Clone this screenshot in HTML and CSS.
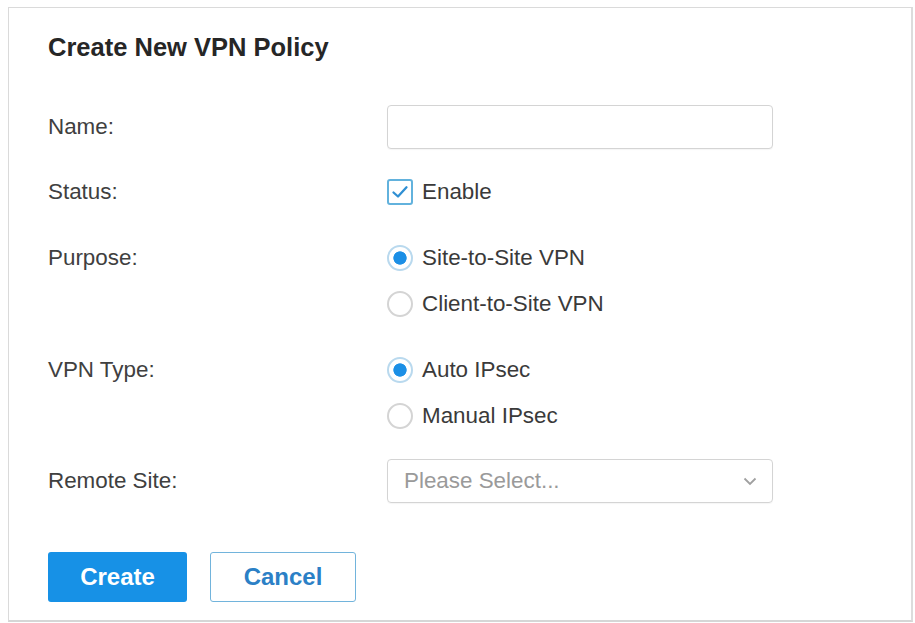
FILE: index.html
```html
<!DOCTYPE html>
<html lang="en">
<head>
  <meta charset="utf-8">
  <title>Create New VPN Policy</title>
  <link rel="stylesheet" href="styles.css">
</head>
<body>
  <div class="policy-card">
    <h1 class="policy-title">Create New VPN Policy</h1>

    <div class="field">
      <label class="field-label" for="policyName">Name:</label>
      <input class="text-input" type="text" id="policyName">
    </div>

    <div class="field">
      <span class="field-label option-label">Status:</span>
      <div class="options">
        <label class="option">
          <span class="checkbox">
            <svg width="20" height="20" viewBox="0 0 20 20"><path d="M3.5 10.5 L8 14.5 L16.5 5.3" fill="none" stroke="#2f8fd3" stroke-width="2.3" stroke-linecap="round" stroke-linejoin="round"/></svg>
          </span>
          Enable
        </label>
      </div>
    </div>

    <div class="field">
      <span class="field-label option-label">Purpose:</span>
      <div class="options">
        <label class="option"><span class="radio checked"></span>Site-to-Site VPN</label>
        <label class="option"><span class="radio"></span>Client-to-Site VPN</label>
      </div>
    </div>

    <div class="field">
      <span class="field-label option-label">VPN Type:</span>
      <div class="options">
        <label class="option"><span class="radio checked"></span>Auto IPsec</label>
        <label class="option"><span class="radio"></span>Manual IPsec</label>
      </div>
    </div>

    <div class="field">
      <span class="field-label">Remote Site:</span>
      <div class="select-box">
        <span class="placeholder">Please Select...</span>
        <svg width="14" height="9" viewBox="0 0 14 9"><path d="M1.5 1.5 L7 7 L12.5 1.5" fill="none" stroke="#a0a0a0" stroke-width="1.8"/></svg>
      </div>
    </div>

    <div class="actions">
      <button class="btn btn-primary">Create</button>
      <button class="btn btn-outline">Cancel</button>
    </div>
  </div>
</body>
</html>
```

FILE: styles.css
```css
body {
  margin: 0;
  background: #fff;
  font-family: "Liberation Sans", Arial, sans-serif;
  color: #3a3a3a;
}

.policy-card {
  box-sizing: border-box;
  height: 615px;
  margin: 7px 2px 0 8px;
  padding: 24px 39px 0;
  border: 1px solid #dadada;
  border-bottom: 2px solid #d6d6d6;
  border-right: 2px solid #dcdcdc;
}

.policy-title {
  margin: 0 0 43px;
  font-size: 25.5px;
  line-height: 30px;
  font-weight: bold;
  color: #262626;
}

.field {
  display: grid;
  grid-template-columns: 339px 386px;
  align-items: center;
  margin-bottom: 20px;
  font-size: 22.4px;
}

.field-label {
  color: #404040;
}

.option-label {
  align-self: start;
  line-height: 46px;
}

.text-input {
  box-sizing: border-box;
  width: 386px;
  height: 44px;
  margin: 0;
  border: 1px solid #d4d4d4;
  border-radius: 4px;
  outline: none;
  box-shadow: 0 1px 1px rgba(0, 0, 0, 0.04);
}

.options {
  display: flex;
  flex-direction: column;
}

.option {
  display: flex;
  align-items: center;
  height: 46px;
  color: #3a3a3a;
}

.checkbox {
  box-sizing: border-box;
  display: flex;
  justify-content: center;
  align-items: center;
  width: 26px;
  height: 26px;
  margin-right: 9px;
  border: 2px solid #62b2dd;
  border-radius: 3px;
}

.radio {
  box-sizing: border-box;
  width: 26px;
  height: 26px;
  margin-right: 9px;
  border: 2px solid #d4d4d4;
  border-radius: 50%;
  background: #fff;
}

.radio.checked {
  border-color: #b9d9ee;
  background: radial-gradient(circle, #1b8fe6 0, #1b8fe6 6.3px, #fff 7px);
}

.select-box {
  box-sizing: border-box;
  display: flex;
  justify-content: space-between;
  align-items: center;
  width: 386px;
  height: 44px;
  padding: 0 15px 0 16px;
  border: 1px solid #d4d4d4;
  border-radius: 4px;
  box-shadow: 0 1px 1px rgba(0, 0, 0, 0.04);
}

.placeholder {
  color: #9a9a9a;
}

.actions {
  display: flex;
  gap: 23px;
  margin-top: 49px;
}

.btn {
  height: 50px;
  margin: 0;
  border-radius: 3px;
  font-family: "Liberation Sans", Arial, sans-serif;
  font-size: 24px;
  font-weight: bold;
  cursor: pointer;
}

.btn-primary {
  width: 139px;
  border: none;
  background: #1791e6;
  color: #fff;
}

.btn-outline {
  width: 146px;
  border: 1.5px solid #72b4dc;
  background: #fff;
  color: #2b80c6;
}
```
